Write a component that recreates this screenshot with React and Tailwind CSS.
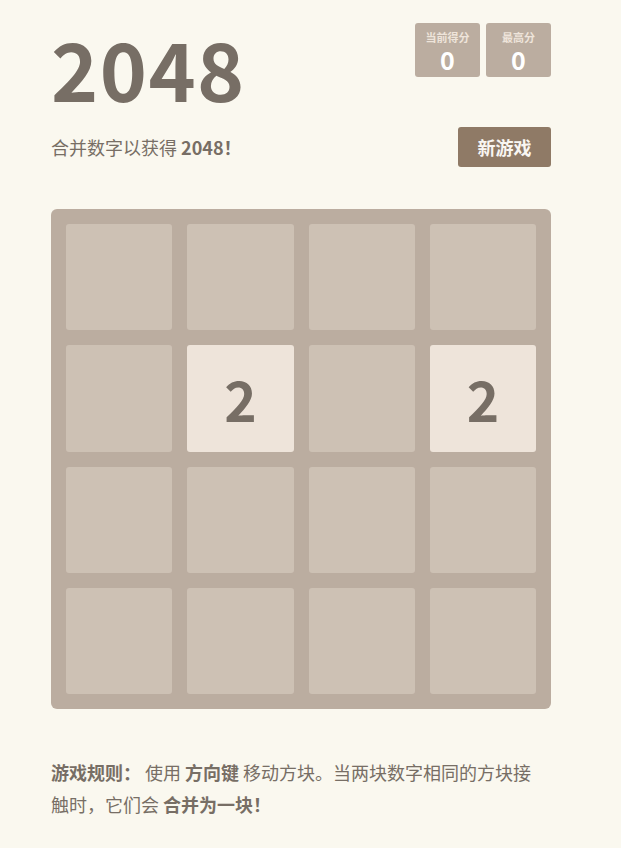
import React from "react";

const board = [
  [0, 0, 0, 0],
  [0, 2, 0, 2],
  [0, 0, 0, 0],
  [0, 0, 0, 0],
];

export default function App() {
  return (
    <div
      className="min-h-screen w-full bg-[#faf8ef] text-[#776e65]"
      style={{ fontFamily: '"Noto Sans CJK SC", sans-serif' }}
    >
      <div className="ml-[51px] w-[500px] pt-[23px] pb-[30px]">
        <div className="flex items-start justify-between">
          <h1 className="mt-[4px] text-[80px] font-bold leading-[1] tracking-[1.5px]">2048</h1>
          <div className="flex gap-[6px]">
            <div className="flex h-[54px] w-[65px] flex-col items-center rounded-[3px] bg-[#bbada0] pt-[7px]">
              <span className="text-[11px] font-bold leading-[14px] text-[#eee4da]">当前得分</span>
              <span className="text-[25px] font-bold leading-[30px] text-white">0</span>
            </div>
            <div className="flex h-[54px] w-[65px] flex-col items-center rounded-[3px] bg-[#bbada0] pt-[7px]">
              <span className="text-[11px] font-bold leading-[14px] text-[#eee4da]">最高分</span>
              <span className="text-[25px] font-bold leading-[30px] text-white">0</span>
            </div>
          </div>
        </div>
        <div className="mt-[20px] flex items-center justify-between">
          <p className="text-[18px] leading-[24px]">
            合并数字以获得 <strong className="font-bold">2048！</strong>
          </p>
          <button className="h-[40px] w-[93px] rounded-[3px] bg-[#8f7a66] text-[18px] font-bold text-[#f9f6f2]">
            新游戏
          </button>
        </div>
        <div className="mt-[42px] grid h-[500px] w-[500px] grid-cols-4 grid-rows-4 gap-[15px] rounded-[6px] bg-[#bbada0] p-[15px]">
          {board.flat().map((v, i) =>
            v ? (
              <div
                key={i}
                className="flex items-center justify-center rounded-[3px] bg-[#eee4da] text-[55px] font-bold text-[#776e65]"
              >
                {v}
              </div>
            ) : (
              <div key={i} className="rounded-[3px] bg-[#cdc1b4]" />
            )
          )}
        </div>
        <p className="mt-[47px] w-[490px] text-[18px] leading-[32px]">
          <strong className="font-bold">游戏规则：</strong> 使用 <strong className="font-bold">方向键</strong> 移动方块。当两块数字相同的方块接触时，它们会 <strong className="font-bold">合并为一块！</strong>
        </p>
      </div>
    </div>
  );
}
